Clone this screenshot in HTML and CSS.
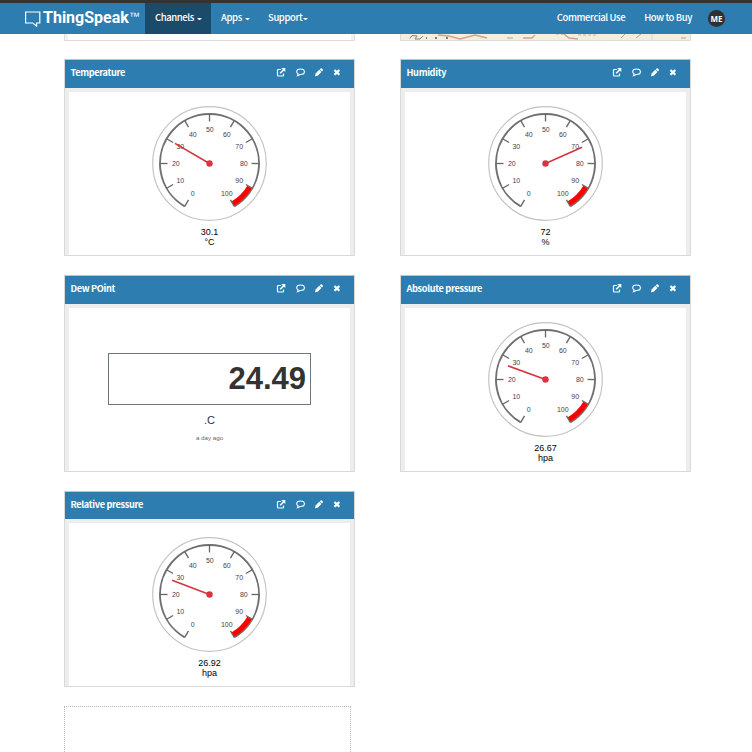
FILE: index.html
```html
<!DOCTYPE html>
<html lang="en">
<head>
<meta charset="utf-8">
<title>ThingSpeak Channel</title>
<link rel="stylesheet" href="styles.css">
</head>
<body>
<header class="navbar">
  <a class="brand">
    <svg class="brand-mark" width="16" height="17" viewBox="0 0 16 17"><path d="M.6 1h14.200v11h-3.200v3l-3.800-3H.6z" fill="none" stroke="#fff" stroke-width="1.200"/></svg>
    <span class="brand-name">ThingSpeak</span><span class="tm">™</span>
  </a>
  <nav class="menu">
    <a class="item active"><span>Channels</span><i class="caret"></i></a>
    <a class="item apps"><span>Apps</span><i class="caret"></i></a>
    <a class="item support"><span>Support</span><i class="caret"></i></a>
  </nav>
  <nav class="right">
    <a>Commercial Use</a>
    <a>How to Buy</a>
    <span class="avatar">ME</span>
  </nav>
</header>
<main class="grid">
  <section class="card stub"></section>
  <section class="card stub">
    <svg class="map" width="289" height="6" viewBox="0 0 289 6">
      <rect width="289" height="6" fill="#f3efdf"/>
      <path d="M9 4.500l2-3 5 .5-2 3h5l3-3" fill="none" stroke="#888078"/>
      <path d="M25 4h1M34 4h2M45 4h2" stroke="#555" stroke-width="1.600"/>
      <path d="M37 1l11 1 11 3 15-4 12 3M134 1l-3 3-9 0M163 0l5 4 9 1" fill="none" stroke="#d5a18d" stroke-width="1.300"/>
      <path d="M106 4h6M220 4l4-4M235 4l5-4M280 4h5" stroke="#c59a88"/>
      <path d="M155 0h10M177 1h19" stroke="#bbb7aa" stroke-dasharray="3 2"/>
      <path d="M251 0v6" stroke="#ddd6cc"/>
    </svg>
  </section>
  <section class="card" data-title="Temperature" data-value="30.1" data-unit="°C"></section>
  <section class="card" data-title="Humidity" data-value="72" data-unit="%"></section>
  <section class="card" data-title="Dew POint">
    <div class="numeric">
      <div class="readout">24.49</div>
      <div class="unit">.C</div>
      <div class="age">a day ago</div>
    </div>
  </section>
  <section class="card" data-title="Absolute pressure" data-value="26.67" data-unit="hpa"></section>
  <section class="card short" data-title="Relative pressure" data-value="26.92" data-unit="hpa"></section>
  <div class="dropzone"></div>
</main>
<script src="gauges.js"></script>
</body>
</html>
```
FILE: styles.css
```css
* { box-sizing: border-box; }
body {
  margin: 0;
  height: 752px;
  overflow: hidden;
  background: #fff;
  font-family: "Liberation Sans", sans-serif;
}
.navbar {
  display: flex;
  height: 34px;
  border-top: 3px solid #333;
  background: #2e7db1;
  color: #fff;
  font: 500 9.500px/28px "Noto Sans CJK SC", sans-serif;
  letter-spacing: -.4px;
}
.brand { display: flex; width: 145px; padding-left: 25px; letter-spacing: 0; }
.brand-mark { margin: 8px 2px 0 0; flex: none; }
.brand-name { font: bold 16px/29px Roboto, sans-serif; width: 87px; flex: none; white-space: nowrap; }
.tm { font: 11px/26px "Liberation Sans", sans-serif; transform: translateX(-1px); }
.menu { display: flex; }
.item { display: flex; height: 31px; padding-left: 10px; white-space: nowrap; }
.active { width: 66px; background: #1b4b6a; }
.apps { width: 47px; }
.caret { width: 5px; height: 2px; flex: none; margin: 15px 0 0 3px; border: solid transparent; border-width: 2px 2.5px 0; border-top-color: #fff; }
.support .caret { margin-left: 1px; }
.right { display: flex; margin-left: auto; padding-right: 27px; white-space: nowrap; }
.right a { margin-right: 19px; }
.right a + a { margin-right: 16px; }
.avatar {
  width: 17px; height: 17px; margin-top: 7px; border-radius: 50%;
  background: #303030; font: bold 8px/17px "Open Sans", sans-serif; letter-spacing: 0; text-align: center;
}
.grid {
  display: grid;
  grid-template-columns: 291px 291px;
  grid-template-rows: 6px 197px 197px 196px 60px;
  gap: 19px 45px;
  padding-left: 64px;
}
.card { border: 1px solid #d9d9d9; border-top: 0; display: flex; flex-direction: column; }
.stub { height: 7px; border-color: #ddd; box-shadow: inset 3px 0 #f2f0f3, inset -3px 0 #f2f0f3; }
.map { display: block; }
.card-head {
  display: flex; align-items: flex-start; height: 29px; flex: none;
  padding: 0 12px 0 5.500px; border-top: 1px solid #a9c9de;
  background: #2e7db1; color: #fff;
}
.short .card-head { height: 28px; }
.card-head h2 { margin: 0; flex: 1; font: bold 9.200px/24px "Noto Sans CJK SC", sans-serif; letter-spacing: -.34px; }
.icons { display: block; margin-top: 7px; }
.card-body { flex: 1; min-height: 0; border: 4px solid #ededed; border-width: 4px 4px 0; display: flex; justify-content: center; }
.gauge { display: block; width: 130px; height: 155px; }
.gauge .tick-label { font-size: 7px; fill: #444; text-anchor: middle; }
.gauge .value { font-size: 9px; fill: #000; text-anchor: middle; }
.numeric { width: 203px; padding-top: 45px; text-align: center; color: #333; }
.readout { height: 52px; border: 1px solid #6b7780; padding-right: 4px; font: bold 31px/50px "Liberation Sans", sans-serif; text-align: right; }
.unit { margin-top: 9px; font-size: 11px; line-height: 13px; }
.age { margin-top: 7px; font-size: 6.200px; line-height: 8px; color: #666; }
.dropzone { grid-column: 1; width: 287px; border: 1px dotted #bbb; }
```
FILE: gauges.js
```js
const polar = (r, deg) => {
  const a = deg * Math.PI / 180;
  return (r * Math.sin(a)).toFixed(2) + ' ' + (-r * Math.cos(a)).toFixed(2);
};
const angle = v => -150 + v * 3;

const icons = `<svg class="icons" width="66" height="11" viewBox="0 0 66 11" fill="none" stroke="#fff">
  <path d="M5 2.500H2.200q-.7 0-.7.7v5q0 .8.700.8h4.600q.7 0 .7-.7V6.500" stroke-width="1.200"/>
  <path d="M4.200 6.300L8 2.500" stroke-width="1.500"/><path d="M5.200 1h4.100v4.100z" fill="#fff" stroke="none"/>
  <path d="M24.500 2c2.300 0 3.900 1.200 3.900 2.800s-1.700 2.700-3.900 2.700h-.6q-.9 1.100-2.500 1.300l.8-1.800q-1.500-.8-1.500-2.200C20.700 3.200 22.300 2 24.500 2z" stroke-width="1.100"/>
  <path d="M39 9.200l.5-2.700 3.700-3.700 2.200 2.200-3.700 3.700zM43.700 2.300l.9-.9q.5-.5 1 0l1.200 1.200q.5.5 0 1l-.9.9z" fill="#fff" stroke="none"/>
  <path d="M58.500 3l4.800 4.800M63.300 3l-4.800 4.800" stroke-width="2.300"/>
</svg>`;

function gauge(value, unit) {
  let marks = '';
  for (let v = 0; v <= 100; v += 10) {
    const a = angle(v);
    marks += `<path d="M${polar(42, a)}L${polar(49.5, a)}" stroke="#666" stroke-width="1.300"/>`;
    const [x, y] = polar(34, a).split(' ');
    marks += `<text class="tick-label" x="${+x + .3}" y="${+y + 2.8}">${v}</text>`;
  }
  return `<svg class="gauge" viewBox="-64.500 -71.500 130 155">
    <circle r="56.800" fill="none" stroke="#c4c4c4" stroke-width="1.200"/>
    <path d="M${polar(49.5, -150)}A49.500 49.500 0 1 1 ${polar(49.5, 150)}" fill="none" stroke="#6f6f6f" stroke-width="1.900"/>
    ${marks}
    <path d="M${polar(46.5, 120.5)}A46.500 46.500 0 0 1 ${polar(46.5, 149.5)}" fill="none" stroke="#f00" stroke-width="5.200"/>
    <path d="M0 0L${polar(40, angle(value))}" stroke="#d9333f" stroke-width="1.600"/>
    <circle r="3.200" fill="#d9333f"/>
    <text class="value" x="0" y="71.500">${value}</text>
    <text class="value" x="0" y="81.500">${unit}</text>
  </svg>`;
}

document.querySelectorAll('.card[data-title]').forEach(card => {
  const { title, value, unit } = card.dataset;
  const content = value ? gauge(value, unit) : card.innerHTML;
  card.innerHTML = `<div class="card-head"><h2>${title}</h2>${icons}</div><div class="card-body">${content}</div>`;
});
```
